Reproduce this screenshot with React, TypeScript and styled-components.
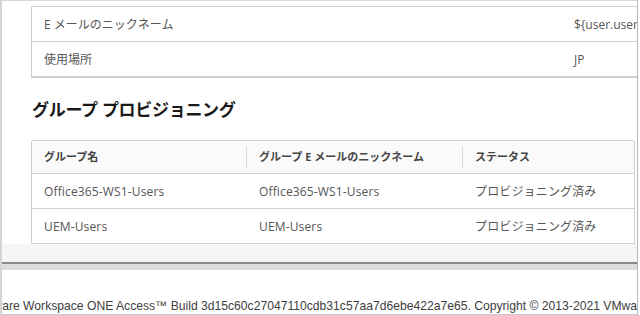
import React from "react";
import styled, { createGlobalStyle } from "styled-components";

const GlobalStyle = createGlobalStyle`
  html, body {
    margin: 0;
    padding: 0;
    background: #ffffff;
  }
  body {
    font-family: "Open Sans", "Noto Sans CJK JP", sans-serif;
    color: #565656;
  }
`;

const jp = `"Open Sans", "Noto Sans CJK JP", sans-serif`;

interface AttrRow {
  name: string;
  value: string;
}

interface GroupRow {
  group: string;
  nickname: string;
  status: string;
}

const attrRows: AttrRow[] = [
  { name: "E メールのニックネーム", value: "${user.userName}" },
  { name: "使用場所", value: "JP" },
];

const groupRows: GroupRow[] = [
  { group: "Office365-WS1-Users", nickname: "Office365-WS1-Users", status: "プロビジョニング済み" },
  { group: "UEM-Users", nickname: "UEM-Users", status: "プロビジョニング済み" },
];

const Frame = styled.div`
  width: 635px;
  height: 315px;
  border-left: 2px solid #d4d4d4;
  border-right: 1px solid #b8b8b8;
  display: flex;
  flex-direction: column;
  overflow: hidden;
  background: #fff;
`;

const Panel = styled.div`
  height: 244px;
  flex: none;
  border-top: 1px solid #d8d8d8;
  padding: 5px 0 0 29px;
  box-sizing: border-box;
  overflow: hidden;
  background: #fff;
`;

const AttrTable = styled.div`
  width: 660px;
  border: 1px solid #d0d0d0;
  border-bottom-width: 2px;
  border-right: none;
  background: #fff;
`;

const AttrLine = styled.div<{ $last?: boolean }>`
  display: grid;
  grid-template-columns: 530px 1fr;
  height: 34px;
  align-items: center;
  border-bottom: ${(p) => (p.$last ? "none" : "1px solid #d0d0d0")};
  font-family: ${jp};
  font-size: 12px;
  color: #565656;
  padding-left: 12px;
  white-space: nowrap;
`;

const Heading = styled.h2`
  margin: 21px 0 0 1px;
  height: 22px;
  line-height: 22px;
  font-family: ${jp};
  font-size: 17px;
  font-weight: 700;
  color: #1a1a1a;
  letter-spacing: -0.3px;
`;

const GroupTable = styled.div`
  margin-top: 19px;
  width: 602px;
  border: 1px solid #d0d0d0;
  border-bottom-width: 2px;
  border-radius: 3px 3px 0 0;
  background: #fff;
`;

const GroupHead = styled.div`
  display: grid;
  grid-template-columns: 214px 216px 1fr;
  height: 32px;
  align-items: center;
  background: #fafafa;
  border-bottom: 1px solid #d0d0d0;
  border-radius: 3px 3px 0 0;
`;

const HeadCell = styled.div<{ $sep?: boolean }>`
  height: 22px;
  line-height: 22px;
  padding-left: 12px;
  border-left: ${(p) => (p.$sep ? "1px solid #dcdcdc" : "none")};
  font-family: ${jp};
  font-size: 11px;
  font-weight: 700;
  color: #454545;
`;

const GroupLine = styled.div<{ $last?: boolean }>`
  display: grid;
  grid-template-columns: 214px 216px 1fr;
  height: 34px;
  align-items: center;
  border-bottom: ${(p) => (p.$last ? "none" : "1px solid #d0d0d0")};
`;

const Cell = styled.div<{ $sep?: boolean }>`
  padding-left: ${(p) => (p.$sep ? "13px" : "12px")};
  font-family: ${jp};
  font-size: 12px;
  letter-spacing: 0.15px;
  color: #565656;
  white-space: nowrap;
`;

const ContentBg = styled.div`
  height: 18px;
  flex: none;
  background: #f6f6f6;
`;

const Divider = styled.div`
  height: 2px;
  flex: none;
  background: #8a8a8a;
`;

const DividerShade = styled.div`
  height: 6px;
  flex: none;
  background: #dddddd;
`;

const Footer = styled.div`
  flex: 1;
  display: flex;
  align-items: flex-end;
  padding-bottom: 1px;
  border-bottom: 1px solid #c8c8c8;
  overflow: hidden;
  white-space: nowrap;
  font-family: "Liberation Sans", Arial, sans-serif;
  font-size: 12.15px;
  line-height: 13px;
  color: #404040;
`;

const FooterText = styled.span`
  margin-left: -26.8px;
`;

export default function App() {
  return (
    <>
      <GlobalStyle />
      <Frame>
        <Panel>
          <AttrTable>
            {attrRows.map((row, i) => (
              <AttrLine key={row.name} $last={i === attrRows.length - 1}>
                <span>{row.name}</span>
                <span>{row.value}</span>
              </AttrLine>
            ))}
          </AttrTable>
          <Heading>グループ プロビジョニング</Heading>
          <GroupTable>
            <GroupHead>
              <HeadCell>グループ名</HeadCell>
              <HeadCell $sep>グループ E メールのニックネーム</HeadCell>
              <HeadCell $sep>ステータス</HeadCell>
            </GroupHead>
            {groupRows.map((row, i) => (
              <GroupLine key={row.group} $last={i === groupRows.length - 1}>
                <Cell>{row.group}</Cell>
                <Cell $sep>{row.nickname}</Cell>
                <Cell $sep>{row.status}</Cell>
              </GroupLine>
            ))}
          </GroupTable>
        </Panel>
        <ContentBg />
        <Divider />
        <DividerShade />
        <Footer>
          <FooterText>
            VMware Workspace ONE Access™ Build 3d15c60c27047110cdb31c57aa7d6ebe422a7e65. Copyright © 2013-2021 VMware, Inc. All rights reserved.
          </FooterText>
        </Footer>
      </Frame>
    </>
  );
}
